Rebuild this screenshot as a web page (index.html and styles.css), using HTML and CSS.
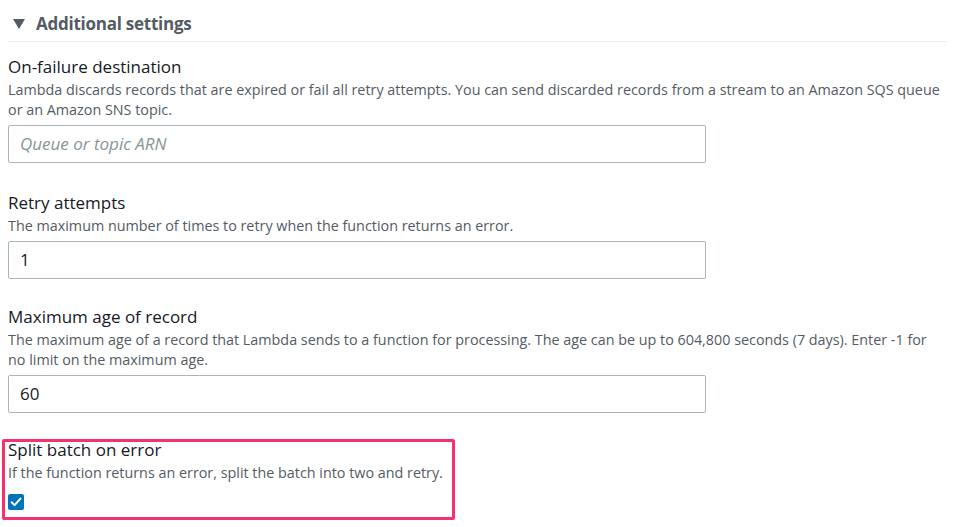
FILE: index.html
```html
<!DOCTYPE html>
<html>
<head>
<meta charset="utf-8">
<link rel="stylesheet" href="styles.css">
</head>
<body>
<div class="panel">
  <div class="section-head">
    <span class="caret"></span>
    <span class="section-title">Additional settings</span>
  </div>

  <div class="field first">
    <div class="label">On-failure destination</div>
    <div class="desc">Lambda discards records that are expired or fail all retry attempts. You can send discarded records from a stream to an Amazon SQS queue or an Amazon SNS topic.</div>
    <div class="input placeholder">Queue or topic ARN</div>
  </div>

  <div class="field retry">
    <div class="label">Retry attempts</div>
    <div class="desc">The maximum number of times to retry when the function returns an error.</div>
    <div class="input">1</div>
  </div>

  <div class="field">
    <div class="label">Maximum age of record</div>
    <div class="desc">The maximum age of a record that Lambda sends to a function for processing. The age can be up to 604,800 seconds (7 days). Enter -1 for no limit on the maximum age.</div>
    <div class="input">60</div>
  </div>

  <div class="field highlight">
    <div class="label">Split batch on error</div>
    <div class="desc">If the function returns an error, split the batch into two and retry.</div>
    <div class="checkbox">
      <svg width="16" height="16" viewBox="0 0 16 16"><rect x="0" y="0" width="16" height="16" rx="2" fill="#0073bb"/><path d="M3.6 8.2 L6.6 11.1 L12.4 4.6" fill="none" stroke="#fff" stroke-width="2" stroke-linecap="round" stroke-linejoin="round"/></svg>
    </div>
  </div>
</div>
</body>
</html>
```

FILE: styles.css
```css
html, body {
  margin: 0;
  padding: 0;
  background: #ffffff;
}
body {
  font-family: "Open Sans", "Noto Sans", Arial, sans-serif;
  color: #16191f;
}
.panel {
  width: 939px;
  padding-left: 8px;
}
.section-head {
  display: flex;
  align-items: center;
  height: 42px;
  padding-top: 6px;
  box-sizing: border-box;
  border-bottom: 1px solid #eaeded;
}
.caret {
  width: 0;
  height: 0;
  margin-left: 5px;
  margin-right: 11px;
  border-left: 6px solid transparent;
  border-right: 6px solid transparent;
  border-top: 10px solid #545b64;
}
.section-title {
  font-size: 17px;
  font-weight: 700;
  color: #545b64;
  letter-spacing: -0.25px;
}
.field {
  margin-top: 27px;
}
.field.first {
  margin-top: 14px;
}
.field.retry {
  margin-top: 29px;
}
.label {
  font-size: 17px;
  line-height: 22px;
  color: #16191f;
}
.desc {
  font-size: 14.35px;
  line-height: 20px;
  color: #545b64;
  margin-top: 2px;
}
.input {
  margin-top: 5px;
  width: 698px;
  height: 38px;
  box-sizing: border-box;
  border: 1px solid #aab7b8;
  border-radius: 2px;
  padding-left: 11px;
  font-size: 17px;
  line-height: 36px;
  color: #16191f;
}
.input.placeholder {
  font-style: italic;
  color: #879596;
}
.highlight {
  position: relative;
  margin-top: 26px;
  height: 81px;
}
.highlight::after {
  content: "";
  position: absolute;
  left: -6px;
  top: 0;
  width: 453px;
  height: 81px;
  box-sizing: border-box;
  border: 3px solid #f7316d;
  border-radius: 2px;
}
.checkbox {
  margin-top: 11px;
  width: 16px;
  height: 16px;
  line-height: 0;
}
```
